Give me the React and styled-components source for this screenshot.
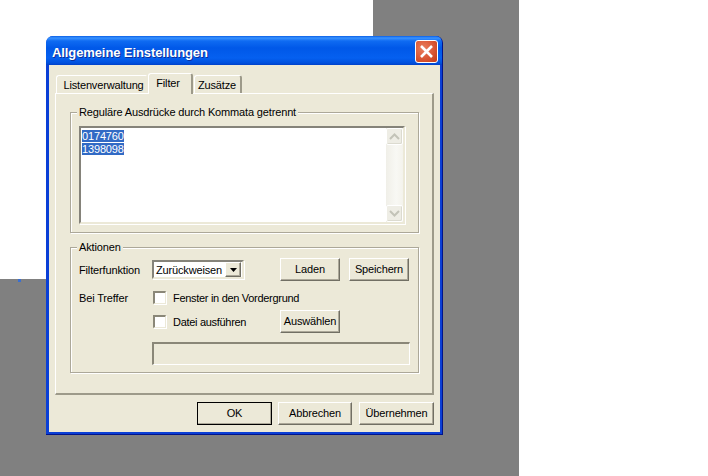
import React from "react";
import styled, { createGlobalStyle } from "styled-components";

const GlobalStyle = createGlobalStyle`
  html, body {
    margin: 0;
    padding: 0;
    background: #ffffff;
  }
  * {
    box-sizing: border-box;
  }
`;

const Desktop = styled.div`
  position: relative;
  width: 519px;
  height: 476px;
  background: #808080;
  overflow: hidden;
  font-family: "Liberation Sans", Arial, sans-serif;
  font-size: 11px;
  letter-spacing: -0.15px;
  color: #000;
`;

const BackWindow = styled.div`
  width: 373px;
  height: 279px;
  background: #ffffff;
`;

const Speck = styled.div`
  position: absolute;
  left: 18px;
  top: 279px;
  width: 3px;
  height: 3px;
  background: #3a6fd0;
`;

const Dialog = styled.div`
  position: absolute;
  left: 46px;
  top: 36px;
  width: 397px;
  height: 399px;
  display: flex;
  flex-direction: column;
  border-radius: 7px 7px 0 0;
  background: #0a3fd6;
  border-right: 1px solid #00138c;
  border-bottom: 1px solid #00138c;
  overflow: hidden;
`;

const TitleBar = styled.div`
  height: 29px;
  flex: none;
  display: flex;
  align-items: center;
  justify-content: space-between;
  padding: 3px 4px 0 6px;
  background: linear-gradient(
    180deg,
    #0a5fe6 0,
    #3a93ff 2px,
    #0f6bf2 5px,
    #0058e8 12px,
    #0560f0 22px,
    #0050dd 27px,
    #0040c8 29px
  );
`;

const Title = styled.span`
  font-family: "Liberation Sans", Arial, sans-serif;
  font-size: 13px;
  font-weight: 700;
  letter-spacing: -0.1px;
  color: #fff;
  text-shadow: 1px 1px 0 #0b2f9c;
`;

const CloseButton = styled.div`
  width: 23px;
  height: 23px;
  margin-top: -2px;
  display: flex;
  align-items: center;
  justify-content: center;
  border: 1px solid #fff;
  border-radius: 3px;
  background: radial-gradient(circle at 35% 35%, #e9805f 0, #dc5a38 50%, #c23a16 100%);
`;

const Client = styled.div`
  flex: 1;
  margin: 0 2px 2px 3px;
  padding: 8px 6px 0;
  background: #ece9d8;
`;

const TabRow = styled.div`
  height: 20px;
  display: flex;
  align-items: flex-end;
  padding-left: 1px;
`;

const Tab = styled.div`
  position: relative;
  z-index: ${(p) => (p.$active ? 2 : 1)};
  width: ${(p) => p.$width}px;
  height: ${(p) => (p.$active ? 21 : 18)}px;
  margin-bottom: ${(p) => (p.$active ? -1 : 0)}px;
  margin-right: ${(p) => p.$gap || 0}px;
  padding-top: 3px;
  padding-left: ${(p) => p.$left || 0}px;
  padding-right: ${(p) => p.$right || 0}px;
  text-align: center;
  white-space: nowrap;
  background: #ece9d8;
  border-top: 1px solid #fff;
  border-left: 1px solid #fff;
  border-right: 2px solid ${(p) => (p.$covered ? "#ece9d8" : "#9d9a8a")};
  border-radius: 3px 3px 0 0;
`;

const TabPanel = styled.div`
  height: 302px;
  padding: 18px 14px 0;
  background: #ece9d8;
  border-top: 1px solid #fff;
  border-left: 1px solid #fff;
  border-right: 2px solid #9d9a8a;
  border-bottom: 2px solid #9d9a8a;
`;

const Group = styled.div`
  position: relative;
  width: 349px;
  height: ${(p) => p.$height}px;
  margin-top: ${(p) => p.$gap || 0}px;
  padding: ${(p) => p.$top}px 8px 0;
  border: 1px solid #aca899;
  box-shadow: inset 1px 1px 0 #fff, 1px 1px 0 #fff;
`;

const GroupLabel = styled.span`
  position: absolute;
  left: 6px;
  top: -7px;
  padding: 0 2px 0 2px;
  background: #ece9d8;
  white-space: nowrap;
`;

const ListBox = styled.div`
  position: relative;
  width: 326px;
  height: 98px;
  padding: 2px 1px;
  background: #fff;
  border: 2px solid #85837a;
  border-right-color: #ece9d8;
  border-bottom-color: #ece9d8;
  box-shadow: 1px 1px 0 #fff;
`;

const ListLine = styled.div`
  height: 13px;
  line-height: 13px;
`;

const Selected = styled.span`
  background: #316ac5;
  color: #fff;
`;

const ScrollBar = styled.div`
  position: absolute;
  right: 0;
  top: 0;
  bottom: 0;
  width: 17px;
  display: flex;
  flex-direction: column;
  justify-content: space-between;
  background: linear-gradient(90deg, #f0efe8, #f8f8f4 60%, #f4f3ec);
`;

const ScrollArrow = styled.div`
  width: 17px;
  height: 17px;
  display: flex;
  align-items: center;
  justify-content: center;
  background: #eeede5;
  border: 1px solid #fff;
  border-radius: 2px;
  box-shadow: inset -1px -1px 0 #dcdbd0;
`;

const Row = styled.div`
  display: flex;
  align-items: center;
  height: 23px;
  margin-top: ${(p) => p.$gap || 0}px;
`;

const FieldLabel = styled.span`
  width: 73px;
  flex: none;
`;

const Select = styled.div`
  width: 92px;
  height: 19px;
  display: flex;
  align-items: center;
  justify-content: space-between;
  padding-left: 2px;
  background: #fff;
  border: 2px solid #85837a;
  border-right-color: #ece9d8;
  border-bottom-color: #ece9d8;
  box-shadow: 1px 1px 0 #fff;
  margin-right: 36px;
`;

const SelectArrow = styled.div`
  width: 16px;
  height: 15px;
  margin-right: 1px;
  display: flex;
  align-items: center;
  justify-content: center;
  background: #ece9d8;
  border-top: 1px solid #fff;
  border-left: 1px solid #fff;
  border-right: 1px solid #716f64;
  border-bottom: 1px solid #716f64;
  box-shadow: inset -1px -1px 0 #aca899;
`;

const Button = styled.div`
  width: ${(p) => p.$width || 60}px;
  height: 23px;
  flex: none;
  display: flex;
  align-items: center;
  justify-content: center;
  padding-bottom: 2px;
  background: #ece9d8;
  border-top: 1px solid #fff;
  border-left: 1px solid #fff;
  border-right: 1px solid #716f64;
  border-bottom: 1px solid #716f64;
  box-shadow: inset -1px -1px 0 #aca899;
  margin-left: ${(p) => p.$gap || 0}px;
  outline: ${(p) => (p.$default ? "1px solid #000" : "none")};
  outline-offset: -1px;
`;

const CheckLabel = styled.label`
  display: flex;
  align-items: center;
  gap: 7px;
  width: 128px;
  flex: none;
  padding-left: 1px;
  letter-spacing: -0.3px;
  white-space: nowrap;
`;

const CheckBox = styled.span`
  width: 13px;
  height: 13px;
  flex: none;
  background: #fff;
  border-top: 2px solid #8a8778;
  border-left: 2px solid #8a8778;
  border-right: 1px solid #ece9d8;
  border-bottom: 1px solid #ece9d8;
  box-shadow: 1px 1px 0 #fff;
`;

const DisabledEdit = styled.div`
  width: 258px;
  height: 23px;
  margin-left: 73px;
  background: #ece9d8;
  border-top: 2px solid #8a8778;
  border-left: 2px solid #8a8778;
  border-right: 1px solid #fff;
  border-bottom: 1px solid #fff;
`;

const ButtonRow = styled.div`
  display: flex;
  justify-content: flex-end;
  margin-top: 7px;
`;

const Chevron = ({ up }) => (
  <svg width="11" height="7" viewBox="0 0 11 7">
    <path
      d={up ? "M1 6 L5.5 1.5 L10 6" : "M1 1 L5.5 5.5 L10 1"}
      fill="none"
      stroke="#c3c3b8"
      strokeWidth="2"
    />
  </svg>
);

export default function App() {
  return (
    <>
      <GlobalStyle />
      <Desktop>
        <BackWindow />
        <Speck />
        <Dialog>
          <TitleBar>
            <Title>Allgemeine Einstellungen</Title>
            <CloseButton>
              <svg width="15" height="15" viewBox="0 0 15 15">
                <path d="M2 2 L13 13 M13 2 L2 13" stroke="#fff" strokeWidth="2.6" />
              </svg>
            </CloseButton>
          </TitleBar>
          <Client>
            <TabRow>
              <Tab $width={92} $left={4} $covered>Listenverwaltung</Tab>
              <Tab $width={45} $right={4} $gap={1} $active>Filter</Tab>
              <Tab $width={48} $right={1}>Zusätze</Tab>
            </TabRow>
            <TabPanel>
              <Group $height={121} $top={13}>
                <GroupLabel>Reguläre Ausdrücke durch Kommata getrennt</GroupLabel>
                <ListBox>
                  <ListLine><Selected>0174760</Selected></ListLine>
                  <ListLine><Selected>1398098</Selected></ListLine>
                  <ScrollBar>
                    <ScrollArrow><Chevron up /></ScrollArrow>
                    <ScrollArrow><Chevron /></ScrollArrow>
                  </ScrollBar>
                </ListBox>
              </Group>
              <Group $height={126} $top={10} $gap={14}>
                <GroupLabel>Aktionen</GroupLabel>
                <Row>
                  <FieldLabel>Filterfunktion</FieldLabel>
                  <Select>
                    Zurückweisen
                    <SelectArrow>
                      <svg width="7" height="4" viewBox="0 0 7 4">
                        <path d="M0 0 H7 L3.5 4 Z" fill="#000" />
                      </svg>
                    </SelectArrow>
                  </Select>
                  <Button>Laden</Button>
                  <Button $gap={9}>Speichern</Button>
                </Row>
                <Row $gap={5}>
                  <FieldLabel>Bei Treffer</FieldLabel>
                  <CheckLabel><CheckBox />Fenster in den Vordergrund</CheckLabel>
                </Row>
                <Row $gap={1}>
                  <FieldLabel />
                  <CheckLabel><CheckBox />Datei ausführen</CheckLabel>
                  <Button>Auswählen</Button>
                </Row>
                <Row $gap={9}>
                  <DisabledEdit />
                </Row>
              </Group>
            </TabPanel>
            <ButtonRow>
              <Button $width={75} $default>OK</Button>
              <Button $width={74} $gap={6}>Abbrechen</Button>
              <Button $width={75} $gap={7}>Übernehmen</Button>
            </ButtonRow>
          </Client>
        </Dialog>
      </Desktop>
    </>
  );
}
